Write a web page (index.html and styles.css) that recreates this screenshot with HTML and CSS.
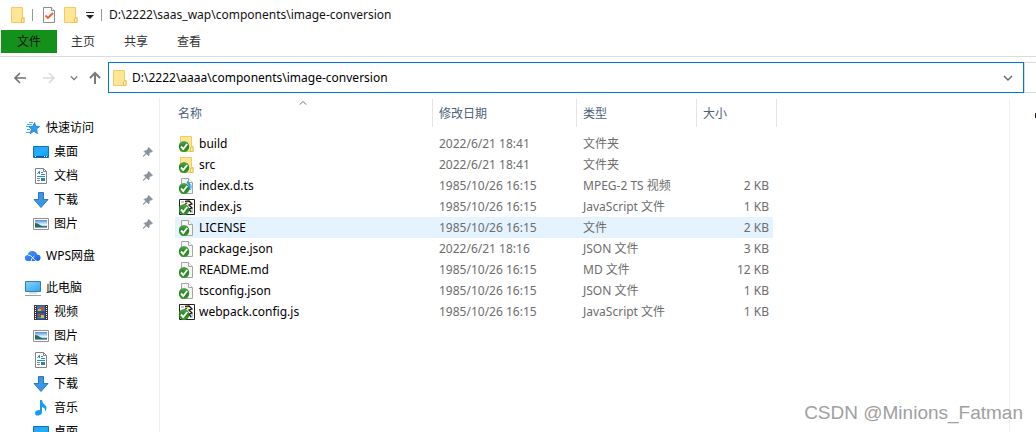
FILE: index.html
```html
<!DOCTYPE html>
<html lang="zh-CN">
<head>
<meta charset="utf-8">
<title>image-conversion</title>
<link rel="stylesheet" href="styles.css">
</head>
<body>
<svg class="defs" aria-hidden="true">
  <defs>
    <linearGradient id="g-blue" x1="0" y1="0" x2="1" y2="1"><stop offset="0" stop-color="#2a9df4"/><stop offset=".5" stop-color="#22b0ff"/><stop offset="1" stop-color="#1296f0"/></linearGradient>
    <linearGradient id="g-screen" x1="0" y1="0" x2="1" y2="1"><stop offset="0" stop-color="#8ad4fb"/><stop offset="1" stop-color="#2ba5f0"/></linearGradient>
    <linearGradient id="g-sky" x1="0" y1="0" x2="0" y2="1"><stop offset="0" stop-color="#4a90d9"/><stop offset=".55" stop-color="#e4f2fb"/><stop offset="1" stop-color="#5d9bbd"/></linearGradient>
    <linearGradient id="g-cloud" x1="0" y1="0" x2="1" y2="1"><stop offset="0" stop-color="#4b9bff"/><stop offset="1" stop-color="#1560e8"/></linearGradient>
    <linearGradient id="g-badge" x1="0" y1="0" x2="0" y2="1"><stop offset="0" stop-color="#5aa653"/><stop offset=".5" stop-color="#23861c"/><stop offset="1" stop-color="#2f9a27"/></linearGradient>
  </defs>
  <symbol id="folder" viewBox="0 0 16 16"><path d="M1.500.5h11v10h1.500v5h-12.500z" fill="#ffe697" stroke="#f0cc60"/><path d="M11.500 15.500v-4l2.500-1v5z" fill="#ffeeb5" stroke="#e8bf4d"/></symbol>
  <symbol id="page" viewBox="0 0 16 16"><path d="M2.500.5h7l4 4v11h-11z" fill="#f5f5f5" stroke="#a5a5a5"/><path d="M9.500.5v4h4" fill="#fff" stroke="#a5a5a5"/></symbol>
  <symbol id="badge" viewBox="0 0 16 16"><ellipse cx="5" cy="10.500" rx="5.200" ry="5.500" fill="url(#g-badge)"/><path d="M2 10.500l2.200 2.500 4-5" fill="none" stroke="#fff" stroke-width="2"/></symbol>
  <symbol id="file" viewBox="0 0 16 16"><use href="#page"/><use href="#badge"/></symbol>
  <symbol id="dir" viewBox="0 0 16 16"><use href="#folder"/><use href="#badge"/></symbol>
  <symbol id="media" viewBox="0 0 16 16"><use href="#page"/><path d="M8 4q4 2 2 8" fill="none" stroke="#2499ed" stroke-width="2"/><path d="M11.500 6q2 3 0 6" fill="none" stroke="#62b8f5"/><use href="#badge"/></symbol>
  <symbol id="script" viewBox="0 0 16 16"><path d="M.5.5h15v15H.5z" fill="#fff" stroke="#222"/><path d="M2 2h3v2H2zM11 10h3v4h-3z" fill="#c9c9c9"/><path d="M6 2.500l4-.5 3 3-3 1 3 3-3 1 2 3M8 4L5 6" fill="none" stroke="#111" stroke-width="1.300"/><path d="M7 3.500h2.500" stroke="#e8c720" stroke-width="1.500"/><use href="#badge"/></symbol>
  <symbol id="check" viewBox="0 0 16 16"><path d="M2.500.5h8l3 3v12h-11z" fill="#fafafa" stroke="#8d8d8d"/><path d="M10.500.5v3h3" fill="#fff" stroke="#8d8d8d"/><path d="M4.500 8.500l2.500 2.500 5-5" fill="none" stroke="#e8602c" stroke-width="1.800"/></symbol>
  <symbol id="star" viewBox="0 0 16 16"><path d="M9.500 2.500l1.200 3.800 4 .1-3.100 2.600.8 4.500-3.600-2.200-3.700 2.500 1.300-4.600-2.600-2.700 4-.1z" fill="#2a9df4" stroke="#177cc8" stroke-width=".8"/><path d="M2 4.500h5M1 6.500h3M2 9.500h3M1 12.500h4M4 2.500h4" stroke="#4aaef2"/></symbol>
  <symbol id="desktop" viewBox="0 0 16 16"><path d="M.5 2.500h15v11H.5z" fill="url(#g-blue)" stroke="#0c72bd"/><path d="M1 12.500h14" stroke="#075b9c"/><path d="M2 12.500h1M11 12.500h1M13 12.500h1" stroke="#fff"/></symbol>
  <symbol id="doc" viewBox="0 0 16 16"><path d="M2.500.5h8l3 3v12h-11z" fill="#fff" stroke="#848484"/><path d="M10.500.5v3h3" fill="none" stroke="#848484"/><path d="M4.500 6L6.500 3v3M8 4.500h2M8 6.500h4M4 8.500h8" fill="none" stroke="#248bd0"/><path d="M4 10.500h3M4 12.500h3" stroke="#888"/><path d="M8 10h4v3H8z" fill="#347fa5"/></symbol>
  <symbol id="down" viewBox="0 0 16 16"><path d="M5.500.5h5v7h4.500L8 15.500 1 7.500h4.500z" fill="#3997e6" stroke="#2877c0"/></symbol>
  <symbol id="picture" viewBox="0 0 16 16"><path d="M.5 2.500h15v11H.5z" fill="#fff" stroke="#919191"/><path d="M2 4h12v8H2z" fill="url(#g-sky)"/><path d="M2 7q3 0 5 2t7 1v1H2z" fill="#2e695b"/></symbol>
  <symbol id="cloud" viewBox="0 0 16 16"><path d="M3 13a3 3 0 0 1-.4-6A4.800 4.800 0 0 1 12 6.500a3.300 3.300 0 0 1 1 6.500z" fill="url(#g-cloud)"/><path d="M3 7q3 0 5 3t4.500 3.500M6 13.500q0-3.500 3.500-5.500" fill="none" stroke="#fff" stroke-width=".9"/></symbol>
  <symbol id="pc" viewBox="0 0 16 16"><path d="M.5 1.500h15v10H.5z" fill="url(#g-screen)" stroke="#3c7da5"/><path d="M4 13h8" stroke="#b4c5d0"/><path d="M0 15.500h16" stroke="#8fa3b1"/></symbol>
  <symbol id="video" viewBox="0 0 16 16"><path d="M1 1h14v15H1z" fill="#383838"/><path d="M4 1.500h8v6H4z" fill="#3f75bd"/><path d="M4 8.500h8v7H4z" fill="#315caa"/><path d="M5 5h3v2H5zM8 11h3v3H8z" fill="#e7b629"/><path d="M8 3h3v3H8zM5 10h2v2H5z" fill="#cf4b30"/><path d="M5 13h3v1H5z" fill="#57a64a"/><path d="M2.500 2v14M13.500 2v14" stroke="#fff" stroke-dasharray="1 1"/></symbol>
  <symbol id="music" viewBox="0 0 16 16"><path d="M7 0h2q0 3 3 5t0 7q1-4-3-5v5q0 3-3.500 3.500T2 13t5-3z" fill="#169bf3"/></symbol>
  <symbol id="pin" viewBox="0 0 16 16"><path d="M9 2l5 5-1.500 1-1-.2-2 2.200v2l-1 1-2.700-2.700L2 14l-.5-.5L5.200 9.700 2.800 7.300l1-1h2L8 4.300 8 3z" fill="#89939c" stroke="#89939c"/></symbol>
  <symbol id="back" viewBox="0 0 16 16"><path d="M14 8H3M8 3L3 8l5 5" fill="none" stroke="#727272" stroke-width="1.700"/></symbol>
  <symbol id="forward" viewBox="0 0 16 16"><path d="M2 8h11M8 3l5 5-5 5" fill="none" stroke="#dcdcdc" stroke-width="1.700"/></symbol>
  <symbol id="up" viewBox="0 0 16 16"><path d="M8 14V3M3 8l5-5 5 5" fill="none" stroke="#7a7a7a" stroke-width="2"/></symbol>
  <symbol id="chevron" viewBox="0 0 10 10"><path d="M1 3l4 4 4-4" fill="none" stroke="currentColor" stroke-width="1.400"/></symbol>
  <symbol id="sort" viewBox="0 0 10 10"><path d="M1 7l4-4 4 4" fill="none" stroke="#666" stroke-width="1.200"/></symbol>
  <symbol id="menu" viewBox="0 0 10 10"><path d="M1 2.500h8" stroke="#222"/><path d="M1 5h8L5 9z" fill="#222"/></symbol>
</svg>

<div class="window">
  <header class="titlebar">
    <svg class="icon"><use href="#folder"/></svg>
    <span class="divider"></span>
    <button class="plain" aria-label="属性"><svg class="icon"><use href="#check"/></svg></button>
    <button class="plain" aria-label="新建文件夹"><svg class="icon"><use href="#folder"/></svg></button>
    <button class="plain" aria-label="自定义"><svg class="small"><use href="#menu"/></svg></button>
    <span class="divider"></span>
    <span class="title">D:\2222\saas_wap\components\image-conversion</span>
  </header>
  <nav class="tabs">
    <button class="tab active">文件</button>
    <button class="tab">主页</button>
    <button class="tab">共享</button>
    <button class="tab">查看</button>
  </nav>
  <div class="toolbar">
    <div class="history">
      <button class="plain" aria-label="后退"><svg class="icon"><use href="#back"/></svg></button>
      <button class="plain" aria-label="前进"><svg class="icon"><use href="#forward"/></svg></button>
      <button class="plain" aria-label="最近位置"><svg class="tiny"><use href="#chevron"/></svg></button>
      <button class="plain" aria-label="上移"><svg class="icon"><use href="#up"/></svg></button>
    </div>
    <div class="address">
      <svg class="icon"><use href="#folder"/></svg>
      <input class="path" type="text" aria-label="地址" value="D:\2222\aaaa\components\image-conversion">
      <button class="plain" aria-label="以前的位置"><svg class="small"><use href="#chevron"/></svg></button>
    </div>
    <div class="search"></div>
  </div>
  <div class="body">
    <aside class="sidebar">
      <ul class="group">
        <li class="entry root"><svg class="icon"><use href="#star"/></svg><span class="label">快速访问</span></li>
        <li class="entry"><svg class="icon"><use href="#desktop"/></svg><span class="label">桌面</span><svg class="pin"><use href="#pin"/></svg></li>
        <li class="entry"><svg class="icon"><use href="#doc"/></svg><span class="label">文档</span><svg class="pin"><use href="#pin"/></svg></li>
        <li class="entry"><svg class="icon"><use href="#down"/></svg><span class="label">下载</span><svg class="pin"><use href="#pin"/></svg></li>
        <li class="entry"><svg class="icon"><use href="#picture"/></svg><span class="label">图片</span><svg class="pin"><use href="#pin"/></svg></li>
      </ul>
      <ul class="group">
        <li class="entry root"><svg class="icon"><use href="#cloud"/></svg><span class="label">WPS网盘</span></li>
      </ul>
      <ul class="group">
        <li class="entry root"><svg class="icon"><use href="#pc"/></svg><span class="label">此电脑</span></li>
        <li class="entry"><svg class="icon"><use href="#video"/></svg><span class="label">视频</span></li>
        <li class="entry"><svg class="icon"><use href="#picture"/></svg><span class="label">图片</span></li>
        <li class="entry"><svg class="icon"><use href="#doc"/></svg><span class="label">文档</span></li>
        <li class="entry"><svg class="icon"><use href="#down"/></svg><span class="label">下载</span></li>
        <li class="entry"><svg class="icon"><use href="#music"/></svg><span class="label">音乐</span></li>
        <li class="entry"><svg class="icon"><use href="#desktop"/></svg><span class="label">桌面</span></li>
      </ul>
    </aside>
    <main class="content">
      <table class="files">
        <colgroup><col class="c-name"><col class="c-date"><col class="c-type"><col class="c-size"></colgroup>
        <thead>
          <tr><th>名称<svg class="sort"><use href="#sort"/></svg></th><th>修改日期</th><th>类型</th><th>大小</th></tr>
        </thead>
        <tbody>
          <tr><td><span class="name"><svg class="icon"><use href="#dir"/></svg>build</span></td><td>2022/6/21 18:41</td><td>文件夹</td><td></td></tr>
          <tr><td><span class="name"><svg class="icon"><use href="#dir"/></svg>src</span></td><td>2022/6/21 18:41</td><td>文件夹</td><td></td></tr>
          <tr><td><span class="name"><svg class="icon"><use href="#media"/></svg>index.d.ts</span></td><td>1985/10/26 16:15</td><td>MPEG-2 TS 视频</td><td>2 KB</td></tr>
          <tr><td><span class="name"><svg class="icon"><use href="#script"/></svg>index.js</span></td><td>1985/10/26 16:15</td><td>JavaScript 文件</td><td>1 KB</td></tr>
          <tr class="hover"><td><span class="name"><svg class="icon"><use href="#file"/></svg>LICENSE</span></td><td>1985/10/26 16:15</td><td>文件</td><td>2 KB</td></tr>
          <tr><td><span class="name"><svg class="icon"><use href="#file"/></svg>package.json</span></td><td>2022/6/21 18:16</td><td>JSON 文件</td><td>3 KB</td></tr>
          <tr><td><span class="name"><svg class="icon"><use href="#file"/></svg>README.md</span></td><td>1985/10/26 16:15</td><td>MD 文件</td><td>12 KB</td></tr>
          <tr><td><span class="name"><svg class="icon"><use href="#file"/></svg>tsconfig.json</span></td><td>1985/10/26 16:15</td><td>JSON 文件</td><td>1 KB</td></tr>
          <tr><td><span class="name"><svg class="icon"><use href="#script"/></svg>webpack.config.js</span></td><td>1985/10/26 16:15</td><td>JavaScript 文件</td><td>1 KB</td></tr>
        </tbody>
      </table>
    </main>
    <section class="preview"><span class="mark"></span></section>
  </div>
  <div class="watermark">CSDN @Minions_Fatman</div>
</div>
</body>
</html>
```
FILE: styles.css
```css
* { box-sizing: border-box; }

body {
  margin: 0;
  background: #fff;
  color: #111;
  font: 12px/16px "Noto Sans", "Noto Sans CJK SC", sans-serif;
}

button, input { font: inherit; color: inherit; }

.defs { position: absolute; width: 0; height: 0; }

.window {
  position: relative;
  display: flex;
  flex-direction: column;
  height: 100vh;
  overflow: hidden;
}

.icon { width: 16px; height: 16px; flex: none; }
.small { width: 10px; height: 10px; }
.tiny { width: 8px; height: 8px; }

.plain {
  display: flex;
  align-items: center;
  justify-content: center;
  padding: 0;
  border: 0;
  background: none;
  color: #666;
}

.titlebar {
  display: flex;
  align-items: center;
  gap: 6px;
  height: 30px;
  padding-left: 10px;
}

.divider { width: 1px; height: 12px; background: #999; }
.titlebar .divider + .plain { margin-left: 2px; }
.title { margin-left: 1px; }

.tabs {
  display: flex;
  height: 27px;
  padding-left: 1px;
  border-bottom: 1px solid #dadbdc;
}

.tab {
  height: 23px;
  padding: 1px 14px 0;
  margin-right: 1px;
  border: 0;
  background: none;
  color: #333;
}

.tab.active { padding: 1px 16px 0; margin-right: 0; background: #13911a; color: #111; }

.toolbar { display: flex; height: 41px; padding-top: 5px; }

.history {
  display: flex;
  align-items: center;
  gap: 13px;
  width: 108px;
  height: 31px;
  padding-left: 12px;
}

.history .plain:last-child { margin-left: -4px; }

.address {
  display: flex;
  flex: 1;
  align-items: center;
  gap: 4px;
  height: 31px;
  padding: 0 10px 0 3px;
  border: 1px solid #0078d7;
}

.path {
  flex: 1;
  min-width: 0;
  padding: 0;
  border: 0;
  outline: 0;
  background: none;
  color: #000;
}

.search {
  width: 12px;
  height: 31px;
  border: 1px solid #d9d9d9;
  border-right: 0;
}

.body { display: flex; flex: 1; min-height: 0; }

.sidebar {
  width: 160px;
  flex: none;
  padding-top: 18px;
  border-right: 1px solid #f0f0f0;
  overflow: hidden;
  color: #000;
}

.group { margin: 0 0 8px; padding: 0; list-style: none; }

.entry {
  display: flex;
  align-items: center;
  gap: 5px;
  height: 24px;
  padding: 0 5px 0 33px;
}

.entry.root { padding-left: 25px; }
.label { flex: 1; white-space: nowrap; }
.pin { width: 12px; height: 12px; }

.content { flex: 1; min-width: 0; padding: 1px 0 0 15px; overflow: hidden; }

.files { width: 602px; table-layout: fixed; border-collapse: separate; border-spacing: 0; color: #6d6d6d; }
.c-name { width: 258px; }
.c-date { width: 144px; }
.c-type { width: 120px; }
.c-size { width: 80px; }

.files th {
  position: relative;
  height: 28px;
  padding: 2px 6px 0;
  border-right: 1px solid #e5e5e5;
  color: #4c607a;
  font-weight: 400;
  text-align: left;
}

.files th:first-child { padding-left: 3px; }
.sort { position: absolute; top: 0; left: 48%; width: 10px; height: 8px; }

.files td { height: 21px; padding: 0 6px; white-space: nowrap; }
.files td:first-child { padding-left: 4px; color: #000; }
.files td:last-child {
  padding-right: 4px;
  border-right: 4px solid transparent;
  background-clip: padding-box;
  text-align: right;
}

.files tbody::before { content: ""; display: block; height: 6px; }
.hover td { background: #e5f3ff; }
.name { display: flex; align-items: center; gap: 4px; }

.preview {
  display: flex;
  justify-content: flex-end;
  width: 27px;
  margin-top: 1px;
  padding-top: 14px;
  border-left: 1px solid #f0f0f0;
}

.mark { width: 1px; height: 5px; background: #3a1a00; }

.watermark {
  position: absolute;
  right: 13px;
  bottom: 7px;
  color: #a0a0a0;
  font: 19px/24px "Liberation Sans", sans-serif;
}
```
